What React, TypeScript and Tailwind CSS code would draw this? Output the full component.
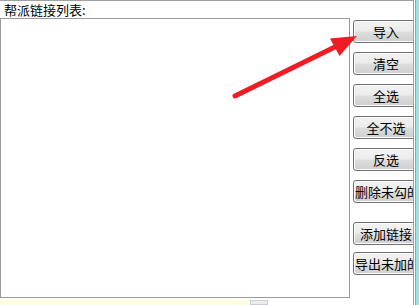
import React from "react";

const FONT = { fontFamily: '"Noto Sans CJK SC", "Noto Sans", sans-serif' };

type Btn = { label: string; mt: string; left?: boolean };

const buttons: Btn[] = [
  { label: "导入", mt: "mt-[2px]" },
  { label: "清空", mt: "mt-[9px]" },
  { label: "全选", mt: "mt-[9px]" },
  { label: "全不选", mt: "mt-[9px]" },
  { label: "反选", mt: "mt-[9px]" },
  { label: "删除未勾的链接", mt: "mt-[9px]", left: true },
  { label: "添加链接", mt: "mt-[19px]" },
  { label: "导出未加的链接", mt: "mt-[7px]", left: true },
];

function WinButton({ label, mt, left }: Btn) {
  return (
    <div
      className={`${mt} ml-[3px] flex h-[23px] w-[66px] shrink-0 items-center overflow-hidden whitespace-nowrap rounded-[3px] border border-[#707070] bg-[linear-gradient(#f3f3f3_0%,#ebebeb_48%,#dddddd_52%,#cfcfcf_100%)] text-[13px] leading-none text-black shadow-[inset_0_0_0_1px_#fcfcfc] ${
        left ? "justify-start pl-[1px]" : "justify-center"
      }`}
    >
      {label}
    </div>
  );
}

export default function App() {
  return (
    <div className="relative flex h-[305px] w-[419px] overflow-hidden bg-white" style={FONT}>
      <div className="flex w-[414px] shrink-0 flex-col border-r border-t border-[#a0a0a0]">
        <div className="h-[18px] pl-[4px] pt-[1px] text-[13px] leading-[16px] text-black">
          帮派链接列表:
        </div>
        <div className="flex">
          <div className="h-[280px] w-[350px] shrink-0 border border-[#9a9a9a] bg-white" />
          <div className="flex w-[63px] flex-col overflow-hidden">
            {buttons.map((b) => (
              <WinButton key={b.label} {...b} />
            ))}
          </div>
        </div>
        <div className="mt-[2px] flex h-[8px]">
          <div className="w-[250px] bg-[#fdfde2]" />
          <div className="w-[18px] border border-[#c8cfd8] bg-[#ececec]" />
        </div>
      </div>
      <div className="w-[1px] bg-white" />
      <div className="w-[1px] bg-[#a0a0a0]" />
      <div className="flex-1 bg-[#9ee3df]" />

      <svg
        className="pointer-events-none absolute left-0 top-0"
        width="419"
        height="305"
        viewBox="0 0 419 305"
      >
        <line
          x1="235"
          y1="96"
          x2="340"
          y2="44.5"
          stroke="#ee1c25"
          strokeWidth="5"
          strokeLinecap="round"
        />
        <polygon points="357,36 330,38.5 339.5,56" fill="#ee1c25" />
      </svg>
    </div>
  );
}
